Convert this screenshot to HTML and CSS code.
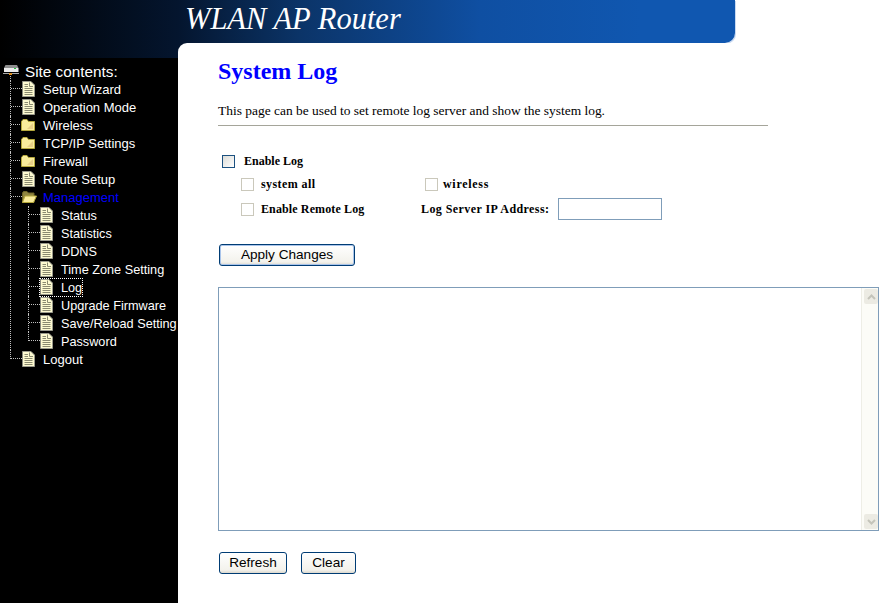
FILE: index.html
```html
<!DOCTYPE html>
<html lang="en">
<head>
    <meta charset="UTF-8">
    <meta name="viewport" content="width=device-width, initial-scale=1.0">
    <title>WLAN AP Router</title>
    <link rel="stylesheet" href="styles.css">
</head>
<body>
    <svg class="icon-defs" width="0" height="0" aria-hidden="true">
        <symbol id="doc" viewBox="0 0 13 16">
            <path d="M0.5 0.5H9L12.5 4V15.5H0.5Z" fill="#fdfad0" stroke="#9a9a8c"/>
            <path d="M0 1V16" stroke="#77776c"/>
            <path d="M2.5 3.5H6M2.5 5.5H6M2.5 7.5H10.5M2.5 9.5H10.5M2.5 11.5H10.5M2.5 13.5H10.5M7.5 1.5V5.5H11" stroke="#8a8a70" fill="none"/>
        </symbol>
        <symbol id="folder" viewBox="0 0 14 12">
            <path d="M0.5 2.5L2 0.5H6L7.5 2.5H13.5V11.5H0.5Z" fill="#f9ec9c" stroke="#b5a83c"/>
            <path d="M6 10L12 4V10Z" fill="#e8cf88"/>
        </symbol>
        <symbol id="folder-open" viewBox="0 0 16 12">
            <path d="M1.5 2L2.5 0.5H6L7.5 2H13V11.5H1.5Z" fill="#8f8540" stroke="#6e6526"/>
            <path d="M4 5H15.5L12.5 11.5H1.5Z" fill="#f9ec9c" stroke="#b5a83c"/>
        </symbol>
    </svg>

    <!-- Top banner -->
    <div class="banner">
        <span class="banner-title">WLAN AP Router</span>
    </div>

    <div class="layout">
        <!-- Left tree menu -->
        <div class="sidebar">
            <div class="sidebar-top"></div>
            <div class="tree-root">
                <svg class="root-icon" width="17" height="15" viewBox="0 0 17 15">
                    <path d="M2.5 0H14L15.5 3H1Z" fill="#8e8e8e"/>
                    <path d="M1 3H15.5V7H1Z" fill="#ececec"/>
                    <path d="M11 3.5H13" stroke="#22c040"/>
                    <path d="M0 8.5H16" stroke="#a8a8a8"/>
                    <path d="M6 8H9V10H6Z" fill="#e09020"/>
                    <path d="M7.5 11V15" stroke="#c0c0c0" stroke-dasharray="1 1"/>
                </svg>
                <span>Site contents:</span>
            </div>
            <ul class="tree">
                <li><div class="node"><span class="elbow"></span><svg class="icon"><use href="#doc"/></svg><span class="label">Setup Wizard</span></div></li>
                <li><div class="node"><span class="elbow"></span><svg class="icon"><use href="#doc"/></svg><span class="label">Operation Mode</span></div></li>
                <li><div class="node"><span class="elbow"></span><svg class="icon folder"><use href="#folder"/></svg><span class="label">Wireless</span></div></li>
                <li><div class="node"><span class="elbow"></span><svg class="icon folder"><use href="#folder"/></svg><span class="label">TCP/IP Settings</span></div></li>
                <li><div class="node"><span class="elbow"></span><svg class="icon folder"><use href="#folder"/></svg><span class="label">Firewall</span></div></li>
                <li><div class="node"><span class="elbow"></span><svg class="icon"><use href="#doc"/></svg><span class="label">Route Setup</span></div></li>
                <li>
                    <div class="node"><span class="elbow"></span><svg class="icon folder open"><use href="#folder-open"/></svg><span class="label active">Management</span></div>
                    <ul class="tree sub">
                        <li><div class="node"><span class="elbow"></span><svg class="icon"><use href="#doc"/></svg><span class="label">Status</span></div></li>
                        <li><div class="node"><span class="elbow"></span><svg class="icon"><use href="#doc"/></svg><span class="label">Statistics</span></div></li>
                        <li><div class="node"><span class="elbow"></span><svg class="icon"><use href="#doc"/></svg><span class="label">DDNS</span></div></li>
                        <li><div class="node"><span class="elbow"></span><svg class="icon"><use href="#doc"/></svg><span class="label">Time Zone Setting</span></div></li>
                        <li><div class="node"><span class="elbow"></span><span class="selected"><svg class="icon"><use href="#doc"/></svg><span class="label">Log</span></span></div></li>
                        <li><div class="node"><span class="elbow"></span><svg class="icon"><use href="#doc"/></svg><span class="label">Upgrade Firmware</span></div></li>
                        <li><div class="node"><span class="elbow"></span><svg class="icon"><use href="#doc"/></svg><span class="label">Save/Reload Setting</span></div></li>
                        <li><div class="node"><span class="elbow"></span><svg class="icon"><use href="#doc"/></svg><span class="label">Password</span></div></li>
                    </ul>
                </li>
                <li><div class="node"><span class="elbow"></span><svg class="icon"><use href="#doc"/></svg><span class="label">Logout</span></div></li>
            </ul>
        </div>

        <!-- System log form -->
        <div class="main">
            <h2>System Log</h2>
            <p class="intro">This page can be used to set remote log server and show the system log.</p>
            <hr>

            <div class="enable-row">
                <input type="checkbox" class="check" id="enable-log">
                <label for="enable-log">Enable Log</label>
            </div>
            <div class="option-row first">
                <div class="opt-left"><input type="checkbox" class="check" disabled><span class="spaced">system all</span></div>
                <div class="opt-right wireless"><input type="checkbox" class="check" disabled><span>wireless</span></div>
            </div>
            <div class="option-row second">
                <div class="opt-left"><input type="checkbox" class="check" disabled><span class="remote">Enable Remote Log</span></div>
                <div class="opt-right server"><span class="spaced">Log Server IP Address:</span><input type="text" class="server-ip"></div>
            </div>

            <button class="btn apply">Apply Changes</button>

            <div class="log-box">
                <textarea class="log-text"></textarea>
                <div class="scrollbar" aria-hidden="true">
                    <div class="scroll-btn"><svg width="9" height="6" viewBox="0 0 9 6"><path d="M1 5L4.5 1.5L8 5" fill="none" stroke="#c4c4ba" stroke-width="2"/></svg></div>
                    <div class="scroll-btn"><svg width="9" height="6" viewBox="0 0 9 6"><path d="M1 1L4.5 4.5L8 1" fill="none" stroke="#c4c4ba" stroke-width="2"/></svg></div>
                </div>
            </div>

            <div class="bottom-buttons">
                <button class="btn refresh">Refresh</button>
                <button class="btn clear">Clear</button>
            </div>
        </div>
    </div>
</body>
</html>
```

FILE: styles.css
```css
html, body {
    margin: 0;
    padding: 0;
    height: 603px;
    overflow: hidden;
    background-color: #ffffff;
}

.icon-defs {
    display: block;
    height: 0;
}

.banner {
    width: 735px;
    height: 43px;
    box-sizing: border-box;
    padding-left: 185px;
    background: linear-gradient(to right, #000000 0, #04152e 178px, #0b3468 300px, #0f4fa2 480px, #1057b0 640px);
    border-bottom-right-radius: 10px;
    box-shadow: 1px 1px 0 #c9daf2;
}

.banner-title {
    font-family: "Liberation Serif", serif;
    font-style: italic;
    font-size: 30.5px;
    line-height: 39px;
    color: #ffffff;
}

.layout {
    display: flex;
    height: 560px;
    background-color: #04152e;
}

/* tree menu */
.sidebar {
    width: 178px;
    flex-shrink: 0;
    overflow: hidden;
    background-color: #000000;
    font-family: "Liberation Sans", Arial, sans-serif;
    color: #ffffff;
}

.sidebar-top {
    height: 15px;
    background: linear-gradient(to right, #000000, #04152e);
}

.tree-root {
    display: flex;
    align-items: flex-end;
    height: 22px;
    padding-left: 3px;
    font-size: 15.3px;
    line-height: 17px;
}

.root-icon {
    margin-right: 5px;
}

.tree,
.tree ul {
    list-style: none;
    margin: 0;
    padding: 0;
}

.tree {
    margin-left: 10px;
}

.tree.sub {
    margin-left: 17px;
}

.tree > li {
    border-left: 1px dotted #c0c0c0;
}

.tree > li:last-child {
    border-left: 0;
}

.node {
    display: flex;
    align-items: center;
    height: 18px;
    white-space: nowrap;
}

.elbow {
    align-self: flex-start;
    flex-shrink: 0;
    width: 11px;
    height: 8px;
    border-bottom: 1px dotted #c0c0c0;
}

.tree > li:last-child > .node > .elbow {
    border-left: 1px dotted #c0c0c0;
}

.icon {
    flex-shrink: 0;
    width: 13px;
    height: 16px;
    margin-right: 8px;
}

.icon.folder {
    width: 14px;
    height: 12px;
    margin-left: -1px;
}

.icon.open {
    width: 16px;
    margin-right: 6px;
}

.label {
    font-size: 13px;
    line-height: 15px;
}

.sub .label {
    padding-top: 2px;
    font-size: 12.7px;
}

.label.active {
    color: #0000ff;
}

.selected {
    display: flex;
    align-items: center;
    height: 17px;
    outline: 1px dotted #ffffff;
}

/* main content */
.main {
    flex: 1;
    min-width: 0;
    box-sizing: border-box;
    padding: 14px 0 0 40px;
    background-color: #ffffff;
    border-top-left-radius: 9px;
    font-family: "Liberation Serif", "Times New Roman", serif;
    color: #000000;
}

h2 {
    margin: 0;
    font-size: 24px;
    line-height: 28px;
    color: #0000ff;
}

.intro {
    margin: 18px 0 0;
    font-size: 13.45px;
    line-height: 15px;
}

hr {
    width: 550px;
    height: 1px;
    margin: 7px 0 0;
    border: 0;
    background-color: #a5a59a;
}

.enable-row,
.opt-left,
.opt-right {
    display: flex;
    align-items: center;
    font-size: 12px;
    font-weight: bold;
}

.enable-row {
    height: 14px;
    margin-top: 28px;
    padding-left: 4px;
}

.check {
    appearance: none;
    width: 13px;
    height: 13px;
    margin: 0;
    flex-shrink: 0;
    border: 1px solid #1c5180;
    background: linear-gradient(135deg, #dcdcd7, #ffffff);
}

.check:disabled {
    border-color: #cac8bb;
    background: #ffffff;
}

.enable-row label {
    margin-left: 9px;
}

.option-row {
    display: flex;
    align-items: center;
    padding-left: 23px;
}

.option-row.first {
    height: 14px;
    margin-top: 9px;
}

.option-row.second {
    height: 22px;
    margin-top: 7px;
}

.opt-left {
    width: 184px;
}

.opt-left span {
    margin-left: 7px;
}

.spaced {
    letter-spacing: 0.42px;
}

.remote {
    letter-spacing: 0.12px;
}

.wireless span {
    margin-left: 5px;
    letter-spacing: 0.7px;
}

.server {
    margin-left: -4px;
}

.server-ip {
    width: 104px;
    height: 22px;
    box-sizing: border-box;
    margin-left: 9px;
    border: 1px solid #7f9db9;
    background-color: #ffffff;
}

.btn {
    display: block;
    height: 22px;
    padding: 0 0 2px;
    box-sizing: border-box;
    font-family: "Liberation Sans", Arial, sans-serif;
    font-size: 13.6px;
    color: #000000;
    border: 1px solid #003c74;
    border-radius: 3px;
    background: linear-gradient(to bottom, #ffffff, #f3f2ec 85%, #dcd8ce);
}

.apply {
    width: 136px;
    margin: 24px 0 0 1px;
    box-shadow: inset 0 0 0 1px #a9c4ea;
}

.log-box {
    display: flex;
    width: 661px;
    height: 244px;
    box-sizing: border-box;
    margin-top: 21px;
    border: 1px solid #7f9db9;
}

.log-text {
    flex: 1;
    min-width: 0;
    margin: 0;
    padding: 0;
    border: 0;
    outline: none;
    resize: none;
}

.scrollbar {
    display: flex;
    flex-direction: column;
    justify-content: space-between;
    width: 17px;
    box-sizing: border-box;
    padding: 1px 1px 1px 2px;
    background-color: #fcfcf7;
    border-left: 1px solid #eeeee6;
}

.scroll-btn {
    display: flex;
    align-items: center;
    justify-content: center;
    width: 14px;
    height: 15px;
    border-radius: 2px;
    background-color: #ecebe3;
}

.bottom-buttons {
    display: flex;
    gap: 14px;
    margin: 21px 0 0 1px;
}

.refresh {
    width: 68px;
}

.clear {
    width: 55px;
}
```
